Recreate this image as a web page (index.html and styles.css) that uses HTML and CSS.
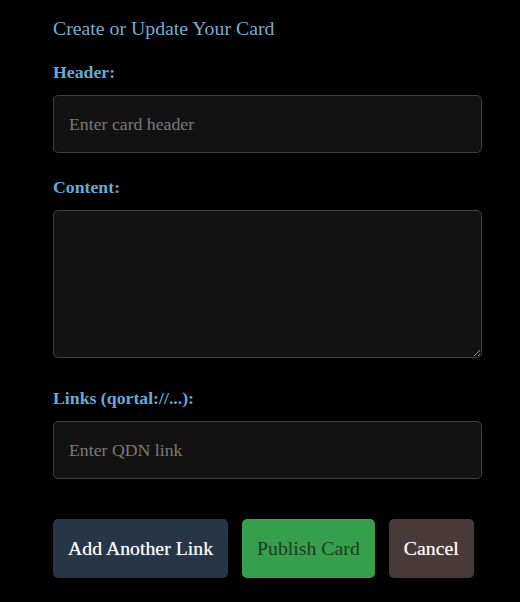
FILE: index.html
```html
<!DOCTYPE html>
<html>
<head>
<meta charset="utf-8">
<link rel="stylesheet" href="styles.css">
</head>
<body>
<div class="form">
  <h2 class="title">Create or Update Your Card</h2>
  <label class="label">Header:</label>
  <input class="field" type="text" placeholder="Enter card header">
  <label class="label">Content:</label>
  <textarea class="field area"></textarea>
  <label class="label">Links (qortal://...):</label>
  <input class="field" type="text" placeholder="Enter QDN link">
  <div class="actions">
    <button class="btn btn-add">Add Another Link</button>
    <button class="btn btn-publish">Publish Card</button>
    <button class="btn btn-cancel">Cancel</button>
  </div>
</div>
</body>
</html>
```
FILE: styles.css
```css
html, body {
  margin: 0;
  padding: 0;
  background: #000;
}
body {
  font-family: "Liberation Serif", "Times New Roman", serif;
}
.form {
  width: 429px;
  padding: 16px 0 0 53px;
  display: flex;
  flex-direction: column;
  align-items: flex-start;
}
.title {
  margin: 0 0 22px;
  font-size: 19.8px;
  font-weight: normal;
  color: #7aaccc;
  line-height: 24px;
}
.label {
  display: block;
  font-size: 17.75px;
  font-weight: bold;
  color: #66abd6;
  line-height: 20px;
  margin-bottom: 13px;
}
.field {
  display: block;
  box-sizing: border-box;
  width: 429px;
  height: 58px;
  margin: 0 0 24px;
  padding: 0 15px;
  background: #121212;
  border: 1px solid #3f3f3f;
  border-radius: 5px;
  font-family: "Liberation Serif", "Times New Roman", serif;
  font-size: 17.75px;
  color: #ddd;
  outline: none;
}
.field::placeholder {
  color: #7a7a7a;
}
.area {
  height: 148px;
  margin-bottom: 30px;
  resize: vertical;
  padding: 10px 15px;
}
.actions {
  display: flex;
  gap: 14px;
  margin-top: 16px;
}
.btn {
  height: 59px;
  padding: 0 15px;
  border: none;
  border-radius: 5px;
  font-family: "Liberation Serif", "Times New Roman", serif;
  font-size: 19.8px;
}
.btn-add {
  background: #243648;
  color: #fff;
  text-shadow: 0 0 1px rgba(255,255,255,0.5);
}
.btn-publish {
  background: #34a04b;
  color: #1f3a24;
}
.btn-cancel {
  background: #483a38;
  color: #fff;
  text-shadow: 0 0 1px rgba(255,255,255,0.5);
}
```
